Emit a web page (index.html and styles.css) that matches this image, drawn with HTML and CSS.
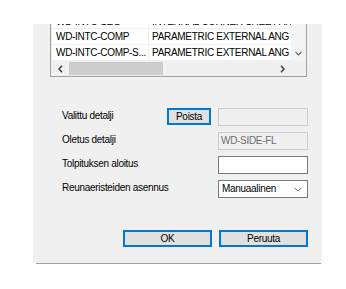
FILE: index.html
```html
<!DOCTYPE html>
<html lang="fi">
<head>
  <meta charset="UTF-8" />
  <meta name="viewport" content="width=device-width, initial-scale=1" />
  <title>Detaljit</title>
  <link rel="stylesheet" href="styles.css">
</head>
<body>
  <div class="dialog">
    <div class="list">
      <div class="list-body">
        <div class="rows">
          <div class="cell cut">WD-INTC-SEG</div>
          <div class="cell cut">INTERNAL CORNER SHEET ANG</div>
          <div class="cell">WD-INTC-COMP</div>
          <div class="cell">PARAMETRIC EXTERNAL ANG</div>
          <div class="cell">WD-INTC-COMP-S...</div>
          <div class="cell">PARAMETRIC EXTERNAL ANG</div>
        </div>
        <div class="vscroll">
          <svg class="arrow-down" width="7" height="5" viewBox="0 0 7 5"><path d="M0.5 0.8 L3.5 3.8 L6.5 0.8" fill="none" stroke="#606060" stroke-width="1.2"/></svg>
        </div>
      </div>
      <div class="hscroll">
        <div class="hbtn">
          <svg width="5" height="8" viewBox="0 0 5 8"><path d="M4 0.8 L1 4 L4 7.2" fill="none" stroke="#404040" stroke-width="1.5"/></svg>
        </div>
        <div class="track"><div class="thumb"></div></div>
        <div class="hbtn">
          <svg width="5" height="8" viewBox="0 0 5 8"><path d="M1 0.8 L4 4 L1 7.2" fill="none" stroke="#404040" stroke-width="1.5"/></svg>
        </div>
        <div class="corner"></div>
      </div>
    </div>

    <div class="form">
      <label class="label">Valittu detalji</label>
      <button class="btn small">Poista</button>
      <div class="field disabled"></div>

      <label class="label wide">Oletus detalji</label>
      <div class="field disabled">WD-SIDE-FL</div>

      <label class="label wide">Tolpituksen aloitus</label>
      <div class="field"></div>

      <label class="label wide">Reunaeristeiden asennus</label>
      <div class="field combo">
        <span>Manuaalinen</span>
        <svg width="8" height="5" viewBox="0 0 8 5"><path d="M0.5 0.8 L4 4 L7.5 0.8" fill="none" stroke="#707070" stroke-width="1"/></svg>
      </div>
    </div>

    <div class="actions">
      <button class="btn">OK</button>
      <button class="btn">Peruuta</button>
    </div>
  </div>
  <div class="dialog-edge"></div>
</body>
</html>
```

FILE: styles.css
```css
body {
  margin: 0;
  background: #fff;
  font-family: "Liberation Sans", Arial, sans-serif;
  font-size: 10px;
  letter-spacing: -0.3px;
  color: #000;
}
.dialog {
  margin: 24px 0 0 33px;
  width: 289px;
  height: 239px;
  background: #f0f0f0;
  overflow: hidden;
}
.dialog-edge {
  margin-left: 36px;
  width: 285px;
  height: 1px;
  background: #a0a0a0;
}

/* lista */
.list {
  margin: -12px 0 0 17px;
  width: 255px;
  border: 1px solid #a0a0a0;
  background: #f0f0f0;
}
.list-body {
  display: flex;
}
.rows {
  flex: 1;
  display: grid;
  grid-template-columns: 96px 1fr;
  grid-auto-rows: 15px;
  gap: 1px;
  padding: 0 0 1px 1px;
  background: #f0f0f0;
}
.cell {
  background: #fff;
  line-height: 15px;
  padding-left: 4px;
  white-space: nowrap;
  overflow: hidden;
}
.cell:nth-child(even) {
  padding-left: 3px;
}
.cell.cut {
  line-height: 18px;
}
.vscroll {
  width: 15px;
  background: #f4f4f4;
  display: flex;
  align-items: flex-end;
  justify-content: center;
  padding-bottom: 5px;
  box-sizing: border-box;
}
.hscroll {
  display: flex;
  height: 15px;
  background: #f0f0f0;
}
.hbtn {
  width: 17px;
  display: flex;
  align-items: center;
  justify-content: center;
}
.hbtn:first-child {
  width: 18px;
}
.track {
  flex: 1;
  padding: 1px 0;
}
.thumb {
  width: 94px;
  height: 100%;
  background: #cdcdcd;
}
.corner {
  width: 15px;
}

/* lomake */
.form {
  margin: 31px 0 0 29px;
  display: grid;
  grid-template-columns: 105px 51px 90px;
  grid-auto-rows: 18px;
  row-gap: 6px;
}
.label {
  line-height: 13px;
  padding-top: 1px;
  white-space: nowrap;
}
.label.wide {
  grid-column: 1 / 3;
}
.field {
  grid-column: 3;
  box-sizing: border-box;
  border: 1px solid #7a7a7a;
  background: #fff;
  padding-left: 2px;
  line-height: 16px;
}
.field.disabled {
  border-color: #cccccc;
  background: #f0f0f0;
  color: #6d6d6d;
}
.combo {
  display: flex;
  align-items: center;
  justify-content: space-between;
  padding: 0 5px 0 3px;
}

.btn {
  font: inherit;
  letter-spacing: inherit;
  color: #000;
  background: #e1e1e1;
  border: 2px solid #0078d7;
  width: 89px;
  height: 17px;
  padding: 0;
  line-height: 13px;
  box-sizing: border-box;
}
.btn.small {
  width: 44px;
  align-self: start;
}
.actions {
  margin: 32px 14px 0 0;
  display: flex;
  justify-content: flex-end;
  gap: 7px;
}
```
